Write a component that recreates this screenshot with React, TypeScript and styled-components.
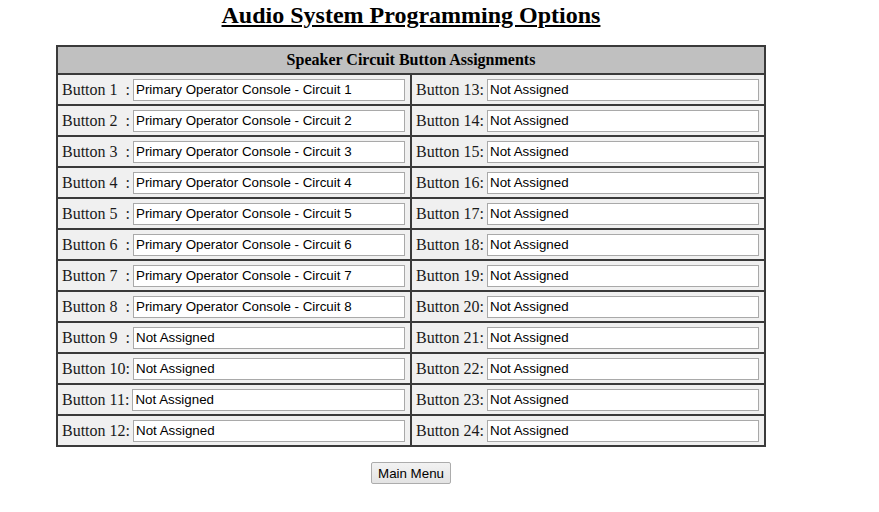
import React from 'react'
import styled, { createGlobalStyle } from 'styled-components'

const GlobalStyle = createGlobalStyle`
  body {
    margin: 8px;
    background: #ffffff;
    font-family: "Liberation Serif", "Times New Roman", serif;
    color: #000;
  }
`

const Page = styled.div`
  width: 806px;
  display: flex;
  flex-direction: column;
  align-items: center;
`

const Title = styled.h1`
  margin: -6px 0 0 0;
  font-size: 24px;
  font-weight: bold;
  text-decoration: underline;
  line-height: 27px;
`

const Grid = styled.table`
  margin-top: 16px;
  width: 710px;
  border-collapse: collapse;
  border: 2px solid #3a3a3a;
`

const HeadCell = styled.th`
  background: #c0c0c0;
  border: 2px solid #3a3a3a;
  height: 26px;
  padding: 0;
  font-size: 16px;
  font-weight: bold;
  text-align: center;
`

const Cell = styled.td`
  background: #f0f0f0;
  border: 2px solid #3a3a3a;
  height: 29px;
  padding: 0 5px 0 4px;
  width: 50%;
`

const Field = styled.div`
  display: flex;
  align-items: center;
  gap: 3px;
`

const Label = styled.span`
  white-space: pre;
  font-size: 16px;
  color: #1a1a1a;
`

const TextBox = styled.input`
  flex: 1;
  box-sizing: border-box;
  height: 22px;
  padding: 1px 2px;
  border: 1px solid #a9a9a9;
  background: #fff;
  font-family: "Liberation Sans", Arial, sans-serif;
  font-size: 13.33px;
  color: #000;
  outline: none;
`

const MenuButton = styled.button`
  margin-top: 15px;
  width: 80px;
  height: 22px;
  padding: 0;
  font-family: "Liberation Sans", Arial, sans-serif;
  font-size: 13.33px;
  color: #000;
  border: 1px solid #acacac;
  border-radius: 2px;
  background: linear-gradient(#f2f2f2, #e3e3e3);
`

const assigned = (n: number): string =>
  n <= 8 ? `Primary Operator Console - Circuit ${n}` : 'Not Assigned'

const label = (n: number): string => `Button ${n}${n < 10 ? '  ' : ''}:`

function App(): JSX.Element {
  const rows = Array.from({ length: 12 }, (_, i) => i + 1)

  return (
    <>
      <GlobalStyle />
      <Page>
        <Title>Audio System Programming Options</Title>
        <Grid>
          <thead>
            <tr>
              <HeadCell colSpan={2}>Speaker Circuit Button Assignments</HeadCell>
            </tr>
          </thead>
          <tbody>
            {rows.map((n) => (
              <tr key={n}>
                <Cell>
                  <Field>
                    <Label>{label(n)}</Label>
                    <TextBox defaultValue={assigned(n)} />
                  </Field>
                </Cell>
                <Cell>
                  <Field>
                    <Label>{label(n + 12)}</Label>
                    <TextBox defaultValue={assigned(n + 12)} />
                  </Field>
                </Cell>
              </tr>
            ))}
          </tbody>
        </Grid>
        <MenuButton>Main Menu</MenuButton>
      </Page>
    </>
  )
}

export default App
